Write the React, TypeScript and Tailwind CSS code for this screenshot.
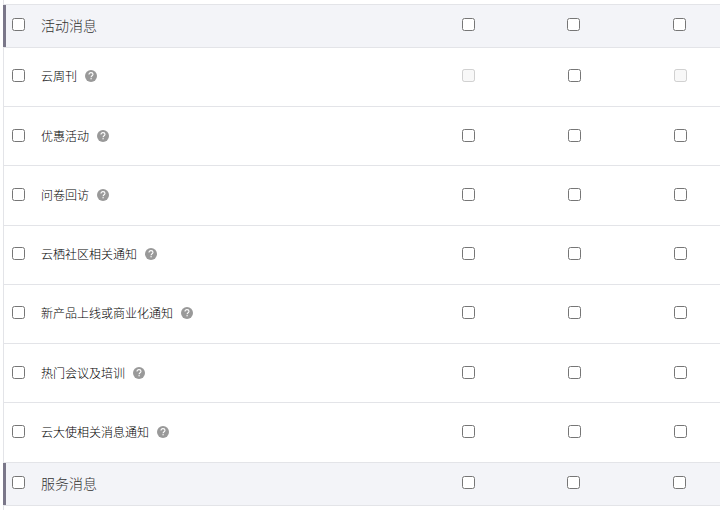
import clsx from "clsx";

type MessageRowProps = {
  label: string;
  disabled?: number[];
};

const activityMessages: MessageRowProps[] = [
  { label: "云周刊", disabled: [0, 2] },
  { label: "优惠活动" },
  { label: "问卷回访" },
  { label: "云栖社区相关通知" },
  { label: "新产品上线或商业化通知" },
  { label: "热门会议及培训" },
  { label: "云大使相关消息通知" },
];

const channels = ["站内信", "邮箱", "短信"];

const Checkbox = ({ disabled }: { disabled?: boolean }) => (
  <input type="checkbox" disabled={disabled} className="block size-[13px]" />
);

const HelpIcon = () => (
  <svg viewBox="0 0 12 12" className="ml-2 size-3 shrink-0">
    <circle cx="6" cy="6" r="6" fill="#999" />
    <path
      d="M4 4.6C4 3.2 4.8 2.6 6 2.6s2 .7 2 1.7c0 1.4-1.9 1.4-1.9 2.9"
      fill="none"
      stroke="#fff"
      strokeWidth="1.1"
    />
    <rect x="5.5" y="8.1" width="1.2" height="1.2" fill="#fff" />
  </svg>
);

const SectionRow = ({ label }: { label: string }) => (
  <div className="flex h-[43px] border-b border-[#e3e4e8] bg-[#f3f4f8]">
    <div className="-ml-px w-[3px] shrink-0 bg-[#7a7789]" />
    <div className="flex w-[456px] shrink-0 pl-1.5">
      <div className="mt-[13px]">
        <Checkbox />
      </div>
      <span className="ml-4 mt-[10px] text-sm leading-5 text-[#333]">
        {label}
      </span>
    </div>
    <div className="mt-[13px] grid grid-cols-[105px_106px_46px]">
      {channels.map((channel) => (
        <Checkbox key={channel} />
      ))}
    </div>
  </div>
);

const MessageRow = ({ label, disabled = [] }: MessageRowProps) => (
  <div className="flex h-[59.25px] border-b border-[#e3e4e8]">
    <div className="flex w-[458px] shrink-0 pl-2">
      <div className="mt-[21.5px]">
        <Checkbox />
      </div>
      <div className="ml-4 mt-[19.5px] flex h-[18px] items-center text-xs text-black">
        {label}
        <HelpIcon />
      </div>
    </div>
    <div className="mt-[21.5px] grid grid-cols-[106px_106px_46px]">
      {channels.map((channel, index) => (
        <Checkbox key={channel} disabled={disabled.includes(index)} />
      ))}
    </div>
  </div>
);

export default function App() {
  return (
    <div
      className={clsx(
        "h-[510px] w-[720px] overflow-hidden bg-white pl-[3px] font-light",
        "font-['Noto_Sans_CJK_SC','Liberation_Sans',sans-serif]",
      )}
    >
      <div className="h-full border-l border-[#e3e4e8] pt-[3.8px]">
        <div className="border-t border-[#e3e4e8]">
          <SectionRow label="活动消息" />
          {activityMessages.map((message) => (
            <MessageRow key={message.label} {...message} />
          ))}
          <SectionRow label="服务消息" />
        </div>
      </div>
    </div>
  );
}
